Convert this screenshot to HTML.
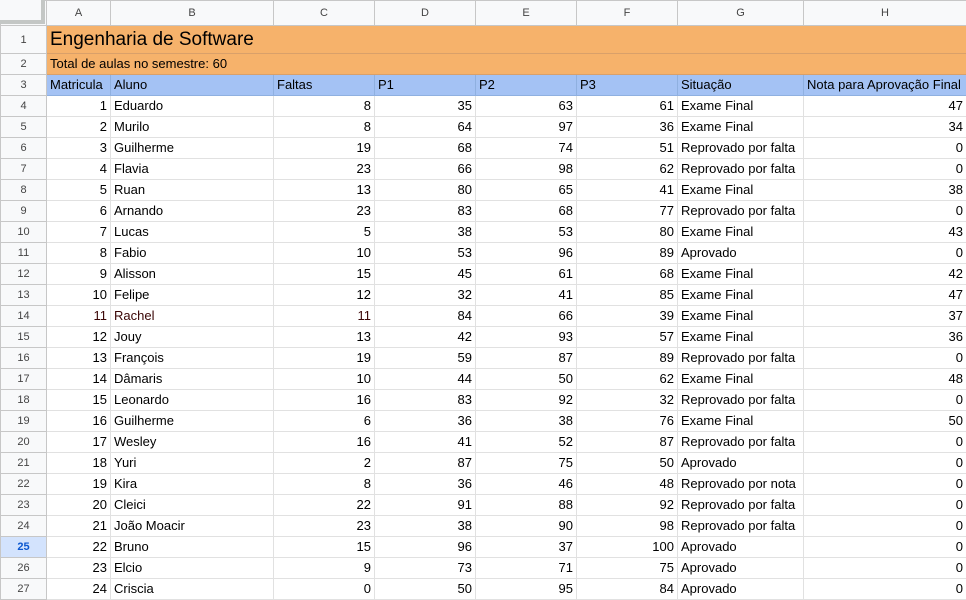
<!DOCTYPE html>
<html><head><meta charset="utf-8"><style>
body{margin:0;width:966px;height:595px;overflow:hidden;background:#fff;font-family:"Liberation Sans",Arial,sans-serif;}
table{border-collapse:collapse;table-layout:fixed;width:966px;position:absolute;left:0;top:0;}
td{border:1px solid #e1e1e1;padding:0 3px;font-size:13px;color:#000;white-space:nowrap;overflow:hidden;height:20px;line-height:20px;box-sizing:border-box;}
tr.h td{background:#f8f9fa;color:#444;font-size:11px;text-align:center;height:25px;border-color:#c7c7c7;}
td.n{background:#f8f9fa;color:#444;font-size:11px;text-align:center;border-color:#c7c7c7;}
td.r{text-align:right;}
tr.t1 td.o{background:#f6b26b;font-size:19px;height:27px;line-height:27px;border-color:#d9a06a;}
tr.t2 td.o{background:#f6b26b;font-size:13px;border-color:#d9a06a;}
tr.t3 td.b{background:#a4c2f4;border-color:#8fb0e0;}
td.sel{background:#d3e3fd;color:#0b57d0;font-weight:bold;}
.red{color:#3a0505;}
#corner{position:absolute;left:0;top:0;width:41px;height:20px;background:#f8f9fa;border-right:4px solid #c4c7c5;border-bottom:4px solid #c4c7c5;}
</style></head><body>
<table>
<colgroup><col style="width:46px"><col style="width:64px"><col style="width:163px"><col style="width:101px"><col style="width:101px"><col style="width:101px"><col style="width:101px"><col style="width:126px"><col style="width:163px"></colgroup>
<tr class="h"><td></td><td>A</td><td>B</td><td>C</td><td>D</td><td>E</td><td>F</td><td>G</td><td>H</td></tr>
<tr class="t1"><td class="n">1</td><td class="o" colspan="8">Engenharia de Software</td></tr>
<tr class="t2"><td class="n">2</td><td class="o" colspan="8">Total de aulas no semestre: 60</td></tr>
<tr class="t3"><td class="n">3</td><td class="b">Matricula</td><td class="b">Aluno</td><td class="b">Faltas</td><td class="b">P1</td><td class="b">P2</td><td class="b">P3</td><td class="b">Situação</td><td class="b">Nota para Aprovação Final</td></tr>
<tr><td class="n">4</td><td class="r">1</td><td>Eduardo</td><td class="r">8</td><td class="r">35</td><td class="r">63</td><td class="r">61</td><td>Exame Final</td><td class="r">47</td></tr>
<tr><td class="n">5</td><td class="r">2</td><td>Murilo</td><td class="r">8</td><td class="r">64</td><td class="r">97</td><td class="r">36</td><td>Exame Final</td><td class="r">34</td></tr>
<tr><td class="n">6</td><td class="r">3</td><td>Guilherme</td><td class="r">19</td><td class="r">68</td><td class="r">74</td><td class="r">51</td><td>Reprovado por falta</td><td class="r">0</td></tr>
<tr><td class="n">7</td><td class="r">4</td><td>Flavia</td><td class="r">23</td><td class="r">66</td><td class="r">98</td><td class="r">62</td><td>Reprovado por falta</td><td class="r">0</td></tr>
<tr><td class="n">8</td><td class="r">5</td><td>Ruan</td><td class="r">13</td><td class="r">80</td><td class="r">65</td><td class="r">41</td><td>Exame Final</td><td class="r">38</td></tr>
<tr><td class="n">9</td><td class="r">6</td><td>Arnando</td><td class="r">23</td><td class="r">83</td><td class="r">68</td><td class="r">77</td><td>Reprovado por falta</td><td class="r">0</td></tr>
<tr><td class="n">10</td><td class="r">7</td><td>Lucas</td><td class="r">5</td><td class="r">38</td><td class="r">53</td><td class="r">80</td><td>Exame Final</td><td class="r">43</td></tr>
<tr><td class="n">11</td><td class="r">8</td><td>Fabio</td><td class="r">10</td><td class="r">53</td><td class="r">96</td><td class="r">89</td><td>Aprovado</td><td class="r">0</td></tr>
<tr><td class="n">12</td><td class="r">9</td><td>Alisson</td><td class="r">15</td><td class="r">45</td><td class="r">61</td><td class="r">68</td><td>Exame Final</td><td class="r">42</td></tr>
<tr><td class="n">13</td><td class="r">10</td><td>Felipe</td><td class="r">12</td><td class="r">32</td><td class="r">41</td><td class="r">85</td><td>Exame Final</td><td class="r">47</td></tr>
<tr><td class="n">14</td><td class="r red">11</td><td class="red">Rachel</td><td class="r red">11</td><td class="r">84</td><td class="r">66</td><td class="r">39</td><td>Exame Final</td><td class="r">37</td></tr>
<tr><td class="n">15</td><td class="r">12</td><td>Jouy</td><td class="r">13</td><td class="r">42</td><td class="r">93</td><td class="r">57</td><td>Exame Final</td><td class="r">36</td></tr>
<tr><td class="n">16</td><td class="r">13</td><td>François</td><td class="r">19</td><td class="r">59</td><td class="r">87</td><td class="r">89</td><td>Reprovado por falta</td><td class="r">0</td></tr>
<tr><td class="n">17</td><td class="r">14</td><td>Dâmaris</td><td class="r">10</td><td class="r">44</td><td class="r">50</td><td class="r">62</td><td>Exame Final</td><td class="r">48</td></tr>
<tr><td class="n">18</td><td class="r">15</td><td>Leonardo</td><td class="r">16</td><td class="r">83</td><td class="r">92</td><td class="r">32</td><td>Reprovado por falta</td><td class="r">0</td></tr>
<tr><td class="n">19</td><td class="r">16</td><td>Guilherme</td><td class="r">6</td><td class="r">36</td><td class="r">38</td><td class="r">76</td><td>Exame Final</td><td class="r">50</td></tr>
<tr><td class="n">20</td><td class="r">17</td><td>Wesley</td><td class="r">16</td><td class="r">41</td><td class="r">52</td><td class="r">87</td><td>Reprovado por falta</td><td class="r">0</td></tr>
<tr><td class="n">21</td><td class="r">18</td><td>Yuri</td><td class="r">2</td><td class="r">87</td><td class="r">75</td><td class="r">50</td><td>Aprovado</td><td class="r">0</td></tr>
<tr><td class="n">22</td><td class="r">19</td><td>Kira</td><td class="r">8</td><td class="r">36</td><td class="r">46</td><td class="r">48</td><td>Reprovado por nota</td><td class="r">0</td></tr>
<tr><td class="n">23</td><td class="r">20</td><td>Cleici</td><td class="r">22</td><td class="r">91</td><td class="r">88</td><td class="r">92</td><td>Reprovado por falta</td><td class="r">0</td></tr>
<tr><td class="n">24</td><td class="r">21</td><td>João Moacir</td><td class="r">23</td><td class="r">38</td><td class="r">90</td><td class="r">98</td><td>Reprovado por falta</td><td class="r">0</td></tr>
<tr><td class="n sel">25</td><td class="r">22</td><td>Bruno</td><td class="r">15</td><td class="r">96</td><td class="r">37</td><td class="r">100</td><td>Aprovado</td><td class="r">0</td></tr>
<tr><td class="n">26</td><td class="r">23</td><td>Elcio</td><td class="r">9</td><td class="r">73</td><td class="r">71</td><td class="r">75</td><td>Aprovado</td><td class="r">0</td></tr>
<tr><td class="n">27</td><td class="r">24</td><td>Criscia</td><td class="r">0</td><td class="r">50</td><td class="r">95</td><td class="r">84</td><td>Aprovado</td><td class="r">0</td></tr>
</table>
<div id="corner"></div>
</body></html>
